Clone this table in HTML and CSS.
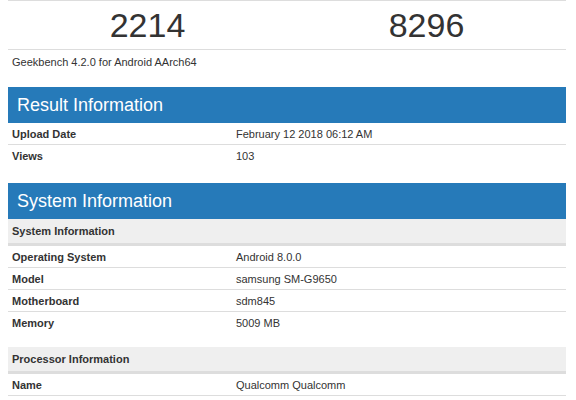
FILE: index.html
```html
<!DOCTYPE html>
<html>
<head>
<meta charset="utf-8">
<link rel="stylesheet" href="styles.css">
</head>
<body>
<div class="page">
  <div class="scores">
    <div class="score">2214</div>
    <div class="score">8296</div>
  </div>
  <div class="version">Geekbench 4.2.0 for Android AArch64</div>

  <div class="section section-result">
    <div class="section-title">Result Information</div>
    <div class="row"><div class="key">Upload Date</div><div class="val">February 12 2018 06:12 AM</div></div>
    <div class="row last"><div class="key">Views</div><div class="val">103</div></div>
  </div>

  <div class="section section-system">
    <div class="section-title">System Information</div>
    <div class="sub">System Information</div>
    <div class="row"><div class="key">Operating System</div><div class="val">Android 8.0.0</div></div>
    <div class="row"><div class="key">Model</div><div class="val">samsung SM-G9650</div></div>
    <div class="row"><div class="key">Motherboard</div><div class="val">sdm845</div></div>
    <div class="row last"><div class="key">Memory</div><div class="val">5009 MB</div></div>
  </div>

  <div class="section">
    <div class="sub">Processor Information</div>
    <div class="row"><div class="key">Name</div><div class="val">Qualcomm Qualcomm</div></div>
  </div>
</div>
</body>
</html>
```
FILE: styles.css
```css
html, body {
  margin: 0;
  padding: 0;
  background: #fff;
}
.page {
  width: 558px;
  margin-left: 8px;
  font-family: "Liberation Sans", Arial, sans-serif;
  color: #333;
}
.scores {
  display: grid;
  grid-template-columns: 1fr 1fr;
  border-top: 1px solid #ddd;
  border-bottom: 1px solid #ddd;
  height: 48px;
}
.score {
  font-size: 34px;
  line-height: 48px;
  text-align: center;
}
.version {
  font-size: 11px;
  line-height: 14px;
  padding: 5px 4px 0;
  height: 32px;
}
.section-result {
  margin-bottom: 17px;
}
.section-system {
  margin-bottom: 14px;
}
.section-title {
  background: #267ab9;
  color: #fff;
  font-size: 18px;
  height: 36px;
  line-height: 36px;
  padding-left: 9px;
}
.sub {
  background: #efefef;
  border-bottom: 3px solid #ddd;
  font-size: 11px;
  font-weight: bold;
  height: 24px;
  line-height: 24px;
  padding: 0 4px;
}
.row {
  display: grid;
  grid-template-columns: 224px 1fr;
  font-size: 11px;
  line-height: 15px;
  border-bottom: 1px solid #ddd;
}
.row.last {
  border-bottom: 0;
}
.key, .val {
  padding: 4px 4px 2px;
}
.key {
  font-weight: bold;
}
```
